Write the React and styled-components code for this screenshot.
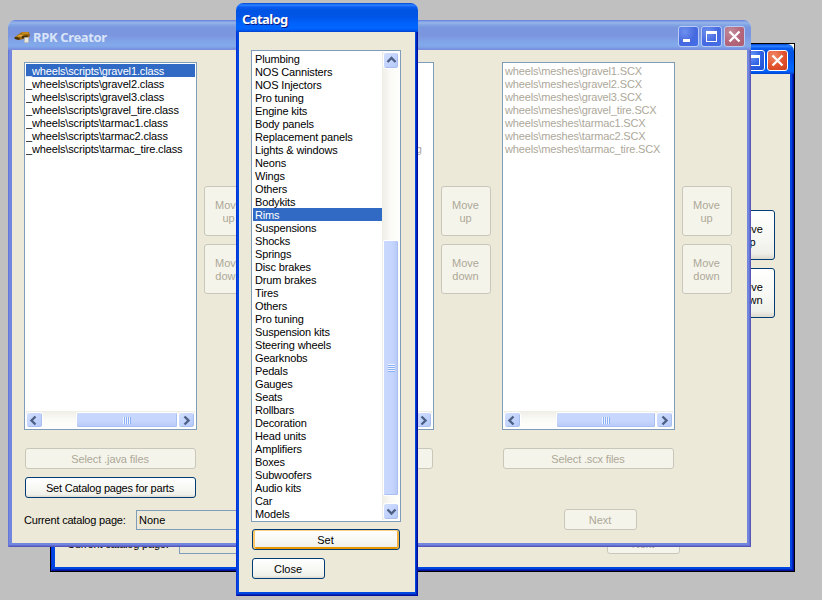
import React from "react";
import styled, { createGlobalStyle, css } from "styled-components";

const Global = createGlobalStyle`
  * { box-sizing: border-box; }
  body { margin: 0; overflow: hidden; background: #c0c0c0; }
`;

const Desktop = styled.main`
  position: relative;
  width: 822px;
  height: 600px;
  overflow: hidden;
  background: #c0c0c0;
  color: #000;
  font: 11px/13px "Liberation Sans", Arial, sans-serif;
`;

const activeTitle = css`
  background: linear-gradient(#0040c8 0, #1c6cf4 4%, #2a80ff 8%, #0a5cf0 14%, #0054e3 24%, #0055e8 48%, #0060fa 68%, #0066ff 86%, #005cf5 93%, #0040cc 100%);
`;
const inactiveTitle = css`
  background: linear-gradient(#6478dc 0, #7e9ee3 4%, #97b4e9 10%, #82a5e4 16%, #7996de 26%, #7b96df 52%, #80a4e8 72%, #82aaeb 84%, #80a5e7 90%, #7a90df 96%, #7a90df 100%);
`;

const Window = styled.section`
  position: absolute;
  left: ${(p) => p.$x}px;
  top: ${(p) => p.$y}px;
  width: ${(p) => p.$w}px;
  height: ${(p) => p.$h}px;
  display: flex;
  flex-direction: column;
  overflow: hidden;
  border-radius: 7px 7px 0 0;
  background: #ece9d8;
`;
const Outline = styled.div`
  position: absolute;
  left: 50px;
  top: 43px;
  width: 745px;
  height: 529px;
  border: 1px solid #000;
  background: linear-gradient(#fff, #fff) top right / 10px 8px no-repeat #000;
`;
const TitleBar = styled.header`
  flex: none;
  height: ${(p) => p.$h}px;
  display: flex;
  align-items: center;
  padding: 3px 6px 0 6px;
  gap: 2px;
  ${(p) => (p.$active ? activeTitle : inactiveTitle)}
`;
const Title = styled.h1`
  flex: 1;
  margin: 0;
  font: bold 13px/16px "Noto Sans", "Open Sans", sans-serif;
  letter-spacing: ${(p) => p.$track}px;
  color: ${(p) => (p.$active ? "#fff" : "#d8e4f8")};
  text-shadow: ${(p) => (p.$active ? "1px 1px #0a1883" : "none")};
  white-space: nowrap;
`;
const Frame = styled.div`
  flex: 1;
  display: flex;
  padding: 0 ${(p) => p.$side}px 4px;
  background: ${(p) => (p.$active ? "#0046e0" : "#7186dc")};
  box-shadow: ${(p) =>
    p.$active
      ? "inset 1px 0 #0831d9, inset -1px 0 #00109c, inset 0 -1px #00109c, inset -2px -2px #0026bc"
      : "inset 1px 0 #6475dc, inset -1px -1px #5657b8, inset -2px -2px #6470cf"};
`;
const Body = styled.div`
  flex: 1;
  background: #ece9d8;
`;

const CaptionButton = styled.span`
  width: 21px;
  height: 21px;
  display: grid;
  place-items: center;
  border: 1px solid ${(p) => (p.$active ? "#fff" : "#b9cbf3")};
  border-radius: 3px;
  background: ${(p) =>
    p.$close
      ? p.$active
        ? "radial-gradient(circle at 30% 25%, #f08a68, #e2512c 55%, #c8401c)"
        : "radial-gradient(circle at 30% 25%, #c28c9c, #b4657a 55%, #ab5d70)"
      : p.$active
        ? "radial-gradient(circle at 30% 25%, #6c98f8, #2c60e4 55%, #1c4ed0)"
        : "radial-gradient(circle at 30% 25%, #6d90ee, #4669e0 55%, #4270e8)"};
  svg { display: block; }
`;

const ListBox = styled.div`
  width: ${(p) => p.$w}px;
  height: ${(p) => p.$h}px;
  display: flex;
  flex-direction: ${(p) => (p.$row ? "row" : "column")};
  border: 1px solid #7f9db9;
  padding: 1px;
  background: #fff;
`;
const Rows = styled.ul`
  flex: 1;
  min-height: 0;
  margin: 0;
  padding: 0;
  list-style: none;
  overflow: hidden;
  color: ${(p) => (p.$disabled ? "#aca899" : "#000")};
  letter-spacing: -0.15px;
`;
const Row = styled.li`
  height: 13px;
  padding: 1px 0 0 ${(p) => p.$pad}px;
  line-height: 12px;
  white-space: nowrap;
  ${(p) => p.$selected && "background: #316ac5; color: #fff;"}
`;

const Track = styled.div`
  flex: none;
  display: flex;
  flex-direction: ${(p) => (p.$vertical ? "column" : "row")};
  ${(p) => (p.$vertical ? "width: 17px; padding-left: 1px;" : "height: 17px; padding-top: 1px;")}
  background: linear-gradient(${(p) => (p.$vertical ? "90deg" : "180deg")}, #efeee6, #fafaf7 50%, #fefefb);
`;
const ScrollButton = styled.span`
  flex: none;
  width: ${(p) => (p.$vertical ? 16 : 17)}px;
  height: ${(p) => (p.$vertical ? 17 : 16)}px;
  display: grid;
  place-items: center;
  border: 1px solid #fff;
  border-radius: 3px;
  background: linear-gradient(135deg, #d2dffe, #c3d3fd 50%, #b5c9f8);
  box-shadow: inset -1px -1px #a9bfee;
  svg { display: block; }
`;
const Gutter = styled.span`
  flex: ${(p) => (p.$size ? "none" : 1)};
  flex-basis: ${(p) => (p.$size ? `${p.$size}px` : "0")};
`;
const Thumb = styled.span`
  flex: none;
  ${(p) =>
    p.$vertical
      ? `width: 16px; height: ${p.$size}px;`
      : `height: 16px; width: ${p.$size}px;`}
  display: grid;
  place-items: center;
  border: 1px solid #fff;
  border-radius: 2px;
  background: linear-gradient(${(p) => (p.$vertical ? "90deg" : "180deg")}, #cad8fe, #c5d5fd 60%, #b6c8f8);
  box-shadow: inset -1px -1px #a9bfee;
`;
const Grip = styled.span`
  width: ${(p) => (p.$vertical ? 7 : 8)}px;
  height: ${(p) => (p.$vertical ? 8 : 7)}px;
  background: repeating-linear-gradient(${(p) => (p.$vertical ? "180deg" : "90deg")}, #eef4fe 0 1px, #8cb0f8 1px 2px);
`;

const Button = styled.button`
  width: ${(p) => p.$w}px;
  height: ${(p) => p.$h || 21}px;
  padding: 2px 1px 0 0;
  border: 1px solid #003c74;
  border-radius: 3px;
  background: linear-gradient(#fff, #f6f6f2 60%, #f0f0ea 88%, #dcd8cc);
  color: #000;
  font: inherit;
  letter-spacing: ${(p) => p.$track || 0}px;
  ${(p) => p.$focus && "box-shadow: inset 0 1px #fbd287, inset 2px 0 #fbc968, inset -2px 0 #f4b13f, inset 0 -2px #e59700;"}
  &:disabled {
    border-color: #c9c7ba;
    background: #f5f4ea;
    color: #aca899;
  }
`;

const Columns = styled.div`
  display: flex;
  padding: 12px 0 0 12px;
`;
const FileColumn = styled.div`
  width: 173px;
  margin-right: 7px;
  display: flex;
  flex-direction: column;
  align-items: center;
`;
const SelectSlot = styled.div`
  margin-top: 18px;
  display: flex;
  flex-direction: column;
  gap: 8px;
  height: 50px;
`;
const MoveColumn = styled.div`
  display: flex;
  flex-direction: column;
  gap: 8px;
  width: 50px;
  margin-right: ${(p) => p.$gap}px;
  padding-top: 124px;
`;
const Footer = styled.div`
  display: flex;
  align-items: center;
  padding: 11px 0 0 12px;
`;
const Label = styled.span`
  width: 112px;
  padding-top: 2px;
  letter-spacing: -0.2px;
`;
const Combo = styled.span`
  width: 180px;
  height: 20px;
  margin-right: 248px;
  padding: 3px 0 0 2px;
  border: 1px solid #7f9db9;
`;

const CatalogBody = styled.div`
  display: flex;
  flex-direction: column;
  padding: 18px 0 0 12px;
`;
const CatalogActions = styled.div`
  display: flex;
  flex-direction: column;
  gap: 8px;
  padding: 7px 0 0 1px;
`;

const arrows = {
  left: "M6.5 1.5 2.5 5.5 6.5 9.5",
  right: "M3.5 1.5 7.5 5.5 3.5 9.5",
  up: "M1.5 7 5.5 3 9.5 7",
  down: "M1.5 3.5 5.5 7.5 9.5 3.5",
};
function Arrow({ dir }) {
  return (
    <svg width="11" height="11" viewBox="0 0 11 11">
      <path d={arrows[dir]} fill="none" stroke="#4d6185" strokeWidth="2.4" />
    </svg>
  );
}

function CarIcon() {
  return (
    <svg width="17" height="14" viewBox="0 0 17 14">
      <path d="M1 7 5 4l3-2 7 0 1 4-3 3-4 0-4 1-4-1z" fill="#9a6410" />
      <path d="M2 6.5 6 4.5l4 .2-3 2z" fill="#e3ab35" />
      <path d="M7 2.4 14 2l1 2-6 .2z" fill="#c98e22" />
      <path d="M0 7.5 3 7l3 1.5-1 1.5-4-1zM8 6l6-.5-1 2-5 1z" fill="#453008" />
      <path d="M10.5 7.5h4v5h-4z" fill="#e9e8df" stroke="#b7b5a8" strokeWidth=".6" />
    </svg>
  );
}

function CaptionButtons({ active }) {
  return (
    <>
      <CaptionButton $active={active}>
        <svg width="19" height="19"><rect x="4" y="12" width="7" height="3" fill="#fff" /></svg>
      </CaptionButton>
      <CaptionButton $active={active}>
        <svg width="19" height="19">
          <path d="M4 4h11v11H4zM5 7v7h9V7z" fill="#fff" fillRule="evenodd" />
        </svg>
      </CaptionButton>
      <CaptionButton $active={active} $close>
        <svg width="19" height="19">
          <path d="M4.5 4.5 14.5 14.5M14.5 4.5 4.5 14.5" stroke="#fff" strokeWidth="2.3" />
        </svg>
      </CaptionButton>
    </>
  );
}

function FileList({ items, selected = -1, disabled, pad = 0, thumb = 102 }) {
  return (
    <ListBox $w={173} $h={368}>
      <Rows $disabled={disabled}>
        {items.map((name, i) => (
          <Row key={name} $pad={pad} $selected={i === selected}>{name}</Row>
        ))}
      </Rows>
      {items.length > 0 && (
        <Track>
          <ScrollButton><Arrow dir="left" /></ScrollButton>
          <Gutter />
          <Thumb $size={thumb}><Grip /></Thumb>
          <ScrollButton><Arrow dir="right" /></ScrollButton>
        </Track>
      )}
    </ListBox>
  );
}

function MoveButtons({ enabled, gap }) {
  return (
    <MoveColumn $gap={gap}>
      <Button $w={50} $h={50} disabled={!enabled}>Move<br />up</Button>
      <Button $w={50} $h={50} disabled={!enabled}>Move<br />down</Button>
    </MoveColumn>
  );
}

const names = ["gravel1", "gravel2", "gravel3", "gravel_tire", "tarmac1", "tarmac2", "tarmac_tire"];
const scripts = names.map((n) => `_wheels\\scripts\\${n}.class`);
const meshes = names.map((n) => `wheels\\meshes\\${n}.SCX`);
const textures = ["", " ", "  ", "   ", "    ", "     ", ".png"];

function CreatorWindow({ x, y, active, filled }) {
  return (
    <Window $x={x} $y={y} $w={743} $h={527}>
      <TitleBar $h={30} $active={active}>
        <CarIcon />
        <Title $active={active} $track={-0.35}>RPK Creator</Title>
        <CaptionButtons active={active} />
      </TitleBar>
      <Frame $side={4} $active={active}>
        <Body>
          <Columns>
            <FileColumn>
              <FileList items={filled ? scripts : []} selected={0} pad={0} />
              <SelectSlot>
                <Button $w={171} $track={-0.1} disabled>Select .java files</Button>
                <Button $w={171} $track={-0.22}>Set Catalog pages for parts</Button>
              </SelectSlot>
            </FileColumn>
            <MoveButtons enabled={!filled} gap={7} />
            <FileColumn>
              <FileList items={filled ? textures : []} disabled pad={138} />
              <SelectSlot><Button $w={171} disabled /></SelectSlot>
            </FileColumn>
            <MoveButtons enabled={!filled} gap={11} />
            <FileColumn>
              <FileList items={filled ? meshes : []} disabled pad={1} thumb={100} />
              <SelectSlot><Button $w={171} $track={-0.15} disabled>Select .scx files</Button></SelectSlot>
            </FileColumn>
            <MoveButtons enabled={!filled} gap={0} />
          </Columns>
          <Footer>
            <Label>Current catalog page:</Label>
            <Combo>{filled ? "None" : ""}</Combo>
            <Button $w={73} disabled>Next</Button>
          </Footer>
        </Body>
      </Frame>
    </Window>
  );
}

const pages = [
  "Plumbing", "NOS Cannisters", "NOS Injectors", "Pro tuning", "Engine kits", "Body panels",
  "Replacement panels", "Lights & windows", "Neons", "Wings", "Others", "Bodykits", "Rims",
  "Suspensions", "Shocks", "Springs", "Disc brakes", "Drum brakes", "Tires", "Others",
  "Pro tuning", "Suspension kits", "Steering wheels", "Gearknobs", "Pedals", "Gauges", "Seats",
  "Rollbars", "Decoration", "Head units", "Amplifiers", "Boxes", "Subwoofers", "Audio kits",
  "Car", "Models",
];

function CatalogWindow() {
  return (
    <Window $x={236} $y={3} $w={182} $h={593}>
      <TitleBar $h={29} $active>
        <Title $active $track={-0.6}>Catalog</Title>
      </TitleBar>
      <Frame $side={3} $active>
        <Body>
          <CatalogBody>
            <ListBox $w={150} $h={472} $row>
              <Rows>
                {pages.map((name, i) => (
                  <Row key={i} $pad={2} $selected={i === 12}>{name}</Row>
                ))}
              </Rows>
              <Track $vertical>
                <ScrollButton $vertical><Arrow dir="up" /></ScrollButton>
                <Gutter />
                <Thumb $vertical $size={256}><Grip $vertical /></Thumb>
                <Gutter $size={7} />
                <ScrollButton $vertical><Arrow dir="down" /></ScrollButton>
              </Track>
            </ListBox>
            <CatalogActions>
              <Button $w={148} $focus>Set</Button>
              <Button $w={73}>Close</Button>
            </CatalogActions>
          </CatalogBody>
        </Body>
      </Frame>
    </Window>
  );
}

export default function App() {
  return (
    <>
      <Global />
      <Desktop>
        <Outline />
        <CreatorWindow x={51} y={44} active />
        <CreatorWindow x={8} y={20} filled />
        <CatalogWindow />
      </Desktop>
    </>
  );
}
